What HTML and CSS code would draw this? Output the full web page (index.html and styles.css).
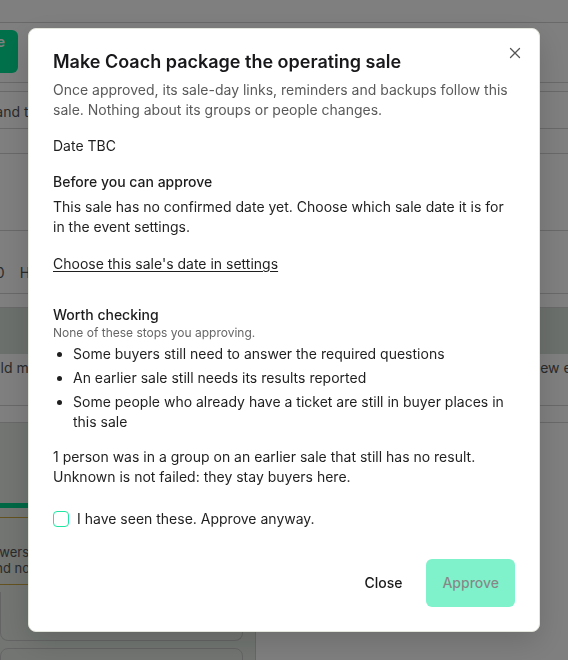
FILE: index.html
```html
<!DOCTYPE html>
<html lang="en">
<head>
<meta charset="utf-8">
<title>Make Coach package the operating sale</title>
<link rel="stylesheet" href="styles.css">
</head>
<body>
<div class="page">
  <div class="row row-top"></div>
  <div class="row row-toolbar">
    <div class="btn-green">
      <span class="bg-l1">Make this the operating sale</span>
      <span class="bg-l2">now</span>
    </div>
  </div>
  <div class="row row-thin"></div>
  <div class="row row-search"><span class="peek peek-a">Search names and tags</span></div>
  <div class="row row-24"></div>
  <div class="row row-76"></div>
  <div class="row row-62"><span class="peek peek-b"><span>Sale 20</span><span>Held</span></span></div>
  <div class="row row-13"></div>
  <div class="band"></div>
  <div class="row row-51"><span class="peek peek-c">Buyers who could make it</span><span class="peek-r">View event</span></div>
  <div class="row row-16"></div>
  <div class="cols">
    <div class="col-left">
      <div class="progress"></div>
      <div class="warn">
        <p class="peek peek-d">Required answers</p>
        <p class="peek peek-e">and notes</p>
      </div>
      <div class="card card-1"></div>
      <div class="card card-2"></div>
    </div>
    <div class="col-right"></div>
  </div>
</div>

<div class="overlay">
  <div class="modal" role="dialog" aria-labelledby="m-title">
    <button class="x-btn" aria-label="Close">
      <svg width="12" height="12" viewBox="0 0 12 12" fill="none" stroke="currentColor" stroke-width="1.3" stroke-linecap="round"><path d="M1.5 1.5l9 9M10.5 1.5l-9 9"/></svg>
    </button>
    <h2 class="m-title" id="m-title">Make Coach package the operating sale</h2>
    <p class="m-desc">Once approved, its sale-day links, reminders and backups follow this sale. Nothing about its groups or people changes.</p>
    <p class="m-date">Date TBC</p>
    <h3 class="m-h">Before you can approve</h3>
    <p class="m-p">This sale has no confirmed date yet. Choose which sale date it is for in the event settings.</p>
    <a class="m-link" href="#">Choose this sale's date in settings</a>
    <h3 class="m-h m-h-worth">Worth checking</h3>
    <p class="m-note">None of these stops you approving.</p>
    <ul class="m-list">
      <li>Some buyers still need to answer the required questions</li>
      <li>An earlier sale still needs its results reported</li>
      <li>Some people who already have a ticket are still in buyer places in this sale</li>
    </ul>
    <p class="m-p m-p-gap">1 person was in a group on an earlier sale that still has no result. Unknown is not failed: they stay buyers here.</p>
    <label class="m-check"><span class="box"></span>I have seen these. Approve anyway.</label>
    <div class="m-foot">
      <button class="btn-close">Close</button>
      <button class="btn-approve" disabled>Approve</button>
    </div>
  </div>
</div>
</body>
</html>
```

FILE: styles.css
```css
* { box-sizing: border-box; }
html, body { margin: 0; padding: 0; height: 100%; }
body {
  font-family: Inter, "Noto Sans", sans-serif;
  color: #1f1f1f;
  background: #fff;
  overflow: hidden;
}
p, h2, h3, ul { margin: 0; }

/* background page */
.page { width: 568px; height: 660px; overflow: hidden; font-size: 14px; color: #555; }
.row { border-bottom: 1px solid #d2d2d2; overflow: hidden; white-space: nowrap; }
.row-top { height: 23px; }
.row-toolbar { height: 60px; padding-top: 7px; }
.btn-green {
  width: 120px; height: 43px; margin-left: -102px;
  background: #00e196; border-radius: 6px; color: #fff; font-weight: 600;
  display: flex; flex-direction: column; justify-content: center;
  padding: 0 13px 4px 10px; line-height: 17px;
}
.bg-l1 { text-align: right; white-space: nowrap; direction: rtl; overflow: hidden; }
.bg-l2 { text-align: left; }
.row-thin { height: 9px; }
.row-search { height: 37px; display: flex; align-items: center; padding-top: 2px; }
.peek { display: block; white-space: nowrap; }
.peek-a { margin-left: -103px; }
.row-24 { height: 25px; }
.row-76 { height: 77px; }
.row-62 { height: 63px; display: flex; align-items: flex-end; padding-bottom: 12px; }
.peek-b { margin-left: -45px; display: flex; gap: 15px; }
.row-13 { height: 14px; }
.band { height: 46px; background: #d8e0d8; }
.row-51 { height: 52px; display: flex; justify-content: space-between; align-items: flex-start; padding-top: 5px; }
.peek-c { margin-left: -106px; }
.peek-r { margin-right: -32px; }
.row-16 { height: 17px; }
.cols { display: flex; height: 240px; }
.col-left { width: 256px; border-right: 1px solid #cfcfcf; background: #e4ebe4; padding: 80px 12px 0 0; }
.col-right { flex: 1; }
.progress { height: 5px; background: #00d08a; }
.warn {
  margin-top: 9px; height: 68px; border-top: 1px solid #c9a640; border-bottom: 1px solid #c9a640;
  padding-top: 26px; font-size: 13px; line-height: 16px; overflow: hidden;
}
.peek-d { margin-left: -81px; }
.peek-e { margin-left: -12px; }
.card { border: 1px solid #c9c9c9; border-radius: 8px; }
.card-1 { margin-top: 7px; height: 49px; border-top-left-radius: 0; border-top-right-radius: 0; border-top: 0; }
.card-2 { margin-top: 7px; height: 40px; }

/* overlay + modal */
.overlay {
  position: fixed; inset: 0; background: rgba(0, 0, 0, 0.5);
  display: flex; align-items: center; justify-content: center;
}
.modal {
  position: relative;
  width: 512px;
  background: #fff;
  border: 1px solid #e3e6dc;
  border-radius: 8px;
  padding: 21px 24px 24px;
  box-shadow: 0 10px 30px rgba(0,0,0,0.15);
  font-size: 14px; line-height: 20px; color: #1f1f1f;
}
.x-btn {
  position: absolute; top: 14px; right: 14px;
  width: 20px; height: 20px; padding: 0; border: 0; background: none;
  color: #555; display: flex; align-items: center; justify-content: center; cursor: pointer;
}
.m-title { font-size: 18px; line-height: 24px; font-weight: 600; color: #18181b; }
.m-desc { margin-top: 6px; color: #5a5a5a; }
.m-date { margin-top: 16px; }
.m-h { margin-top: 16px; font-size: 14px; line-height: 20px; font-weight: 500; color: #1c1c1c; }
.m-p { margin-top: 5px; }
.m-link { display: block; margin-top: 17px; color: #1f1f1f; text-decoration: underline; text-underline-offset: 2px; }
.m-h-worth { margin-top: 31px; }
.m-note { font-size: 12px; line-height: 16px; color: #666; }
.m-list { margin-top: 3px; padding-left: 20px; }
.m-list li { margin-bottom: 4px; }
.m-list li:last-child { margin-bottom: 0; }
.m-p-gap { margin-top: 15px; }
.m-check { margin-top: 22px; display: flex; align-items: center; gap: 8px; cursor: pointer; }
.box {
  width: 16px; height: 16px; border: 1.5px solid #1fe6a3; border-radius: 4px; background: #fff;
  flex: none;
}
.m-foot { margin-top: 30px; display: flex; justify-content: flex-end; gap: 8px; }
.btn-close {
  height: 48px; padding: 0 16px; border: 0; background: none; font: inherit; font-weight: 500;
  color: #1a1a1a; cursor: pointer;
}
.btn-approve {
  height: 48px; padding: 0 16px; border: 0; border-radius: 6px; background: #00e599;
  font: inherit; font-weight: 500; color: #111; opacity: 0.5;
}
```
